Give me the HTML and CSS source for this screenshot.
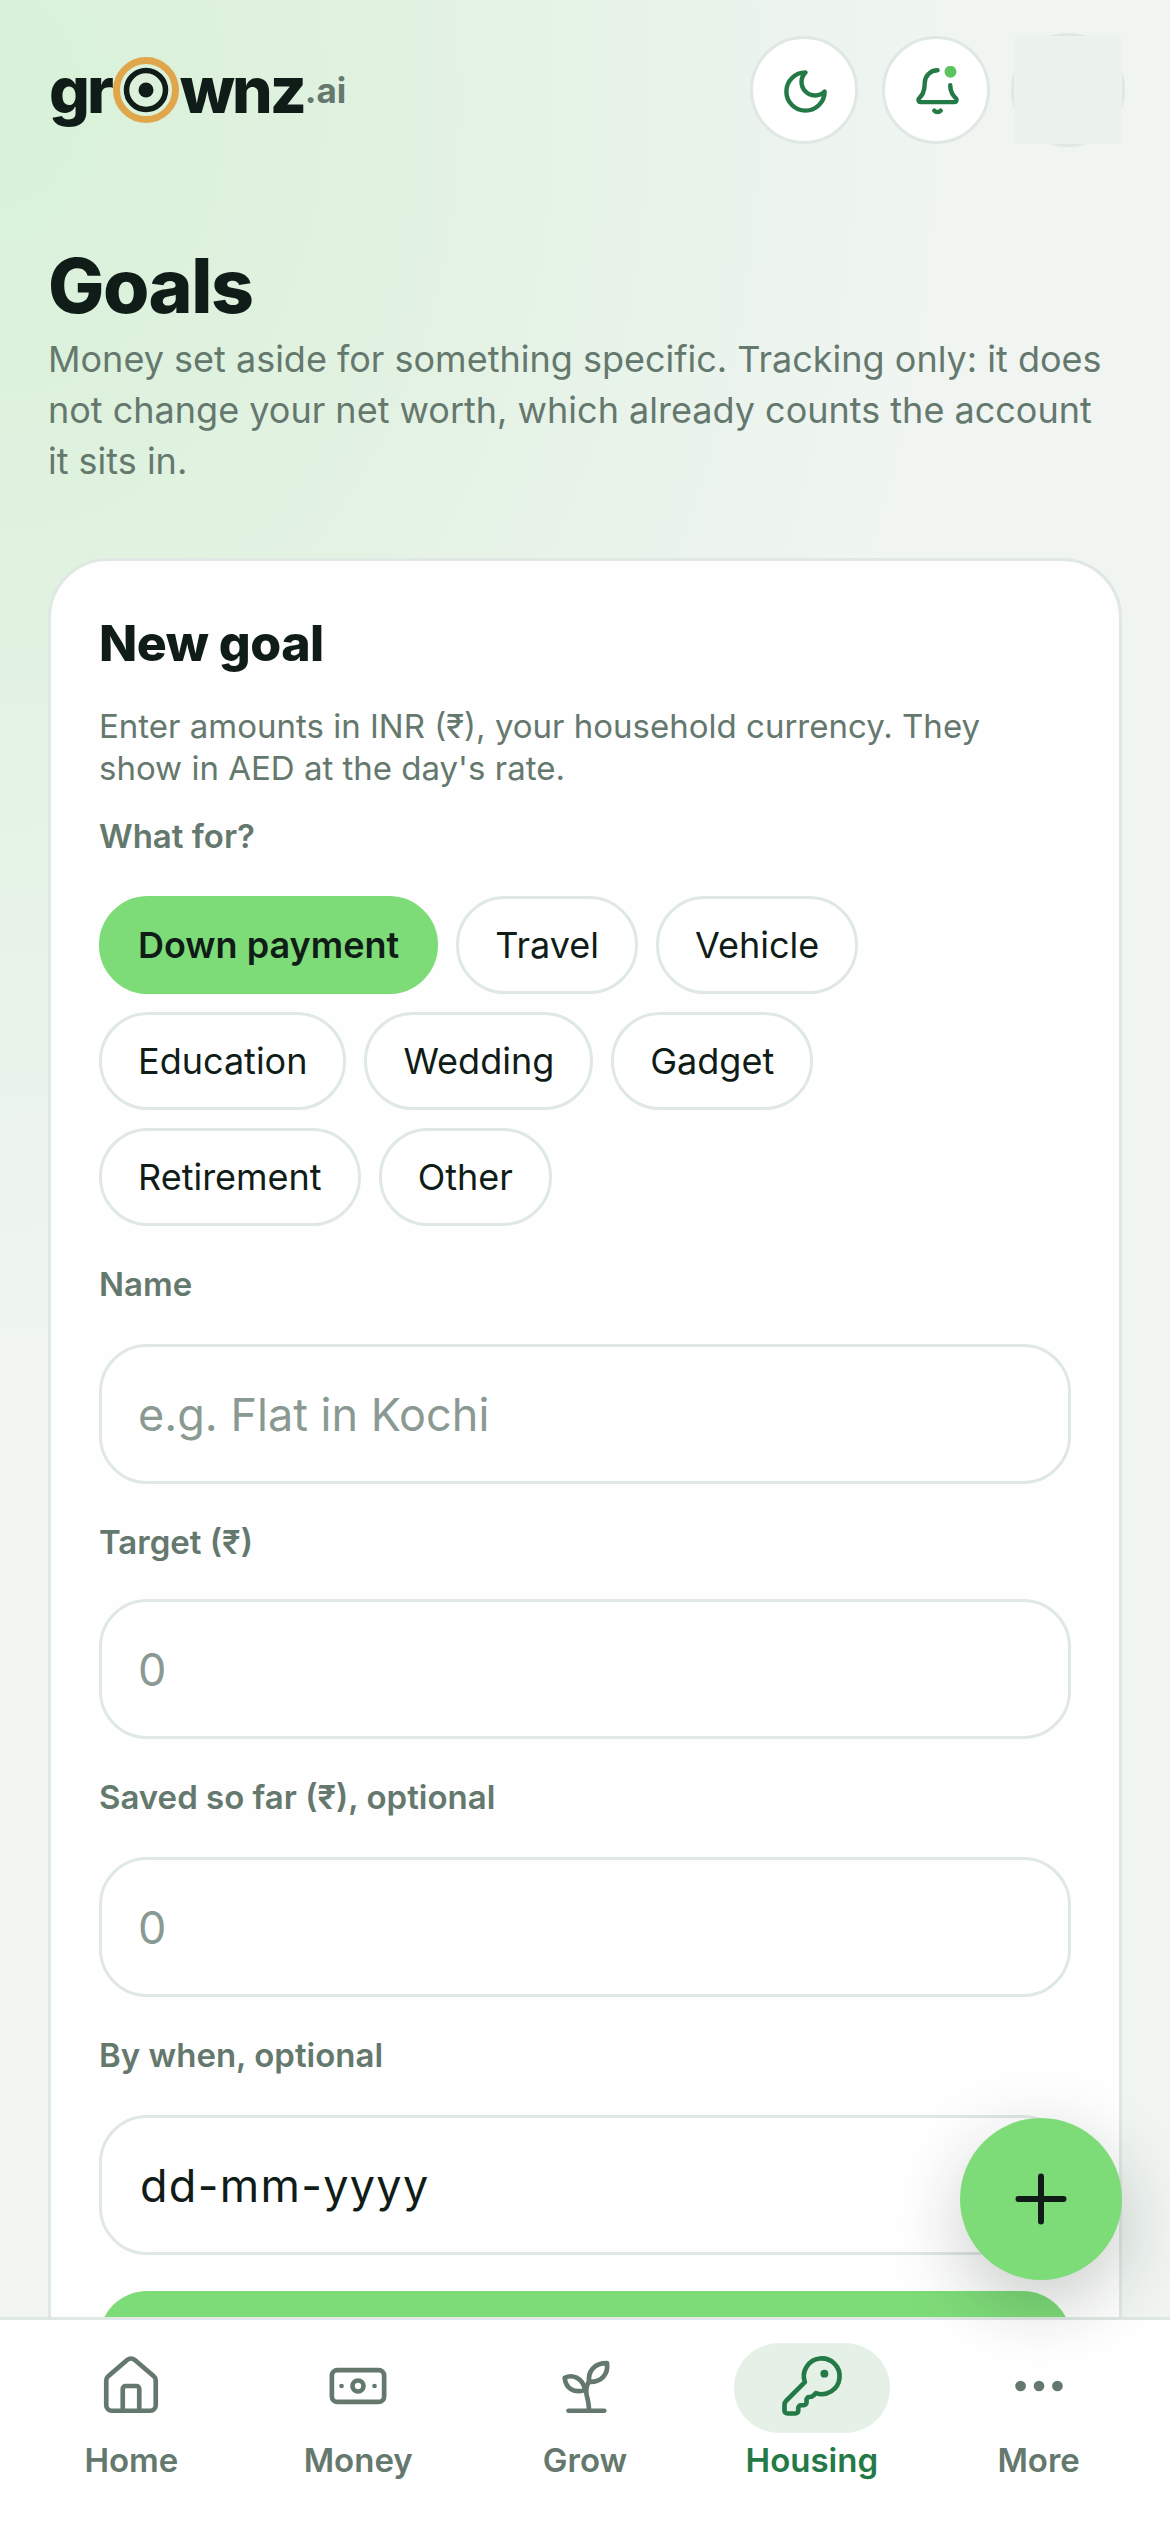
FILE: index.html
```html
<!DOCTYPE html>
<html lang="en">
<head>
  <meta charset="UTF-8">
  <title>Goals</title>
  <link rel="stylesheet" href="styles.css">
</head>
<body>

  <main class="page">
    <!-- TOP BAR -->
    <header class="topbar">
      <div class="logo">
        <span class="logo-text">gr</span>
        <svg class="logo-eye" viewBox="0 0 66 66" aria-hidden="true">
          <circle cx="33" cy="33" r="29.5" fill="none" stroke="#e0a64b" stroke-width="7"/>
          <circle cx="33" cy="33" r="19.5" fill="none" stroke="#101c17" stroke-width="5.5"/>
          <circle cx="33" cy="33" r="7.5" fill="#101c17"/>
        </svg>
        <span class="logo-text">wnz</span>
        <span class="logo-ai">.ai</span>
      </div>
      <div class="topbar-actions">
        <button class="round-btn" aria-label="Theme">
          <svg class="top-icon" viewBox="0 0 24 24"><path d="M12 3a6 6 0 0 0 9 9 9 9 0 1 1-9-9Z"/></svg>
        </button>
        <button class="round-btn" aria-label="Notifications">
          <svg class="top-icon" viewBox="0 0 24 24">
            <path d="M12 2a6 6 0 0 0-6 6c0 4.499-1.411 5.956-2.738 7.326A1 1 0 0 0 4 17h16a1 1 0 0 0 .74-1.673C19.41 13.956 18 12.499 18 9"/>
            <path d="M10.5 21a2 2 0 0 0 3 0"/>
            <circle class="bell-dot" cx="18.1" cy="2.7" r="2.8"/>
          </svg>
        </button>
        <div class="avatar"><div class="avatar-mask"></div></div>
      </div>
    </header>

    <h1 class="title">Goals</h1>
    <p class="subtitle">Money set aside for something specific. Tracking only: it does not change your net worth, which already counts the account it sits in.</p>

    <!-- NEW GOAL -->
    <section class="card">
      <h2 class="card-title">New goal</h2>
      <p class="card-note">Enter amounts in INR (₹), your household currency. They show in AED at the day's rate.</p>

      <label class="field-label label-what">What for?</label>
      <div class="chips">
        <button class="chip chip-on">Down payment</button>
        <button class="chip">Travel</button>
        <button class="chip">Vehicle</button>
        <button class="chip">Education</button>
        <button class="chip">Wedding</button>
        <button class="chip">Gadget</button>
        <button class="chip">Retirement</button>
        <button class="chip">Other</button>
      </div>

      <label class="field-label" for="name">Name</label>
      <input class="field" id="name" type="text" placeholder="e.g. Flat in Kochi">

      <label class="field-label label-target" for="target">Target (₹)</label>
      <input class="field" id="target" type="text" placeholder="0">

      <label class="field-label" for="saved">Saved so far (₹), optional</label>
      <input class="field" id="saved" type="text" placeholder="0">

      <label class="field-label" for="when">By when, optional</label>
      <input class="field field-date" id="when" type="text" value="dd-mm-yyyy">

      <button class="save-btn" aria-label="Save"></button>
    </section>
  </main>

  <button class="fab" aria-label="Add">
    <svg viewBox="0 0 24 24"><path d="M4.5 12h15M12 4.5v15"/></svg>
  </button>

  <!-- BOTTOM NAV -->
  <nav class="tabbar">
    <a class="tab">
      <span class="tab-icon">
        <svg viewBox="0 0 24 24">
          <path d="M15 21v-8a1 1 0 0 0-1-1h-4a1 1 0 0 0-1 1v8"/>
          <path d="M3 10a2 2 0 0 1 .709-1.528l7-5.999a2 2 0 0 1 2.582 0l7 5.999A2 2 0 0 1 21 10v9a2 2 0 0 1-2 2H5a2 2 0 0 1-2-2z"/>
        </svg>
      </span>
      Home
    </a>
    <a class="tab">
      <span class="tab-icon">
        <svg viewBox="0 0 24 24">
          <rect x="2.5" y="6.2" width="19" height="11.6" rx="2"/>
          <circle cx="12" cy="12" r="2"/>
          <path d="M6 12h.01M18 12h.01"/>
        </svg>
      </span>
      Money
    </a>
    <a class="tab">
      <span class="tab-icon">
        <svg viewBox="0 0 24 24">
          <path d="M6 21h13"/>
          <path d="M13.2 10.8c-.8 1.5-1 2.5-.6 4.5.4 1.8 1 3.5.8 5.7"/>
          <path d="M4.6 9c2.5-1.2 6.5-.5 7.4 4.5-4 1.2-7-.5-7.4-4.5z"/>
          <path d="M13.5 10.5c-.5-4 2-6.8 6.5-6.8.5 4-2 7-6.5 6.8z"/>
        </svg>
      </span>
      Grow
    </a>
    <a class="tab tab-on">
      <span class="tab-icon">
        <svg viewBox="0 0 24 24">
          <path d="M2.586 17.414A2 2 0 0 0 2 18.828V21a1 1 0 0 0 1 1h3a1 1 0 0 0 1-1v-1a1 1 0 0 1 1-1h1a1 1 0 0 0 1-1v-1a1 1 0 0 1 1-1h.172a2 2 0 0 0 1.414-.586l.814-.814a6.5 6.5 0 1 0-4-4z"/>
          <circle class="key-hole" cx="16.5" cy="7.5" r=".6"/>
        </svg>
      </span>
      Housing
    </a>
    <a class="tab">
      <span class="tab-icon">
        <svg viewBox="0 0 24 24">
          <circle class="more-dot" cx="5.3" cy="12" r="1.1"/>
          <circle class="more-dot" cx="12" cy="12" r="1.1"/>
          <circle class="more-dot" cx="18.7" cy="12" r="1.1"/>
        </svg>
      </span>
      More
    </a>
  </nav>

</body>
</html>
```
FILE: styles.css
```css
* {
  box-sizing: border-box;
}

body {
  margin: 0;
  height: 100vh;
  display: flex;
  flex-direction: column;
  overflow: hidden;
  position: relative;
  font-family: Inter, "Noto Sans", sans-serif;
  color: #101c17;
  background: radial-gradient(ellipse 950px 1250px at 0 100px, #d8f1d8 0%, #e2f2e2 45%, #f0f5f2 100%);
}

button {
  font-family: inherit;
}

svg {
  display: block;
  fill: none;
  stroke-linecap: round;
  stroke-linejoin: round;
}

.page {
  flex: 1;
  min-height: 0;
  overflow: hidden;
  padding: 36px 48px 0;
}

/* top bar */
.topbar {
  display: flex;
  align-items: center;
  justify-content: space-between;
  height: 108px;
}

.logo {
  display: flex;
  align-items: center;
  margin-left: 1px;
}

.logo-text {
  font-size: 64px;
  font-weight: 800;
  letter-spacing: -3px;
  line-height: 66px;
}

.logo-eye {
  width: 66px;
  height: 66px;
  margin: 0 1px 0 2px;
}

.logo-ai {
  font-size: 35px;
  font-weight: 700;
  color: #65786e;
  margin-left: 1px;
  line-height: 66px;
}

.topbar-actions {
  display: flex;
  align-items: center;
  gap: 24px;
}

.round-btn {
  width: 108px;
  height: 108px;
  padding: 0;
  border-radius: 50%;
  border: 3px solid #dfe8e2;
  background: #fff;
  display: flex;
  align-items: center;
  justify-content: center;
}

.top-icon {
  width: 51px;
  height: 51px;
  margin: 3px 0 0 3px;
  stroke: #237a47;
  stroke-width: 2.1;
}

.bell-dot {
  fill: #5cc45e;
  stroke: none;
}

.avatar {
  width: 114px;
  height: 114px;
  margin: -3px;
  border-radius: 50%;
  border: 3px solid #dfe8e2;
  position: relative;
}

.avatar-mask {
  position: absolute;
  inset: 0;
  background: #ecf3ed;
}

/* heading */
.title {
  margin: 97px 0 3px;
  font-size: 75px;
  line-height: 90px;
  font-weight: 800;
  letter-spacing: -1.5px;
}

.subtitle {
  margin: 0;
  font-size: 36px;
  line-height: 51px;
  color: #65786e;
}

/* card */
.card {
  margin-top: 71px;
  padding: 48px;
  background: #fdfefd;
  border: 3px solid #dfe8e2;
  border-radius: 60px;
}

.card-title {
  margin: 0;
  font-size: 50px;
  line-height: 68px;
  font-weight: 800;
  letter-spacing: -0.5px;
}

.card-note {
  margin: 28px 0 0;
  font-size: 33px;
  line-height: 42px;
  color: #65786e;
}

.field-label {
  display: block;
  margin: 37px 0 39px;
  font-size: 33px;
  line-height: 42px;
  font-weight: 600;
  color: #65786e;
}

.label-what {
  margin: 26px 0 39px;
}

.label-target {
  margin-bottom: 36px;
}

.chips {
  display: flex;
  flex-wrap: wrap;
  gap: 18px;
}

.chip {
  height: 98px;
  padding: 0 36px;
  font-size: 36px;
  color: #101c17;
  background: #fff;
  border: 3px solid #dfe8e2;
  border-radius: 50px;
}

.chip-on {
  font-weight: 600;
  background: #7edc78;
  border-color: #7edc78;
}

.field {
  display: block;
  width: 100%;
  height: 140px;
  padding: 0 36px;
  font-family: inherit;
  font-size: 45px;
  color: #101c17;
  background: #fff;
  border: 3px solid #dfe8e2;
  border-radius: 48px;
}

.field::placeholder {
  color: #8a9a92;
}

.field-date {
  padding-left: 38px;
  letter-spacing: 1.3px;
}

.save-btn {
  display: block;
  width: 100%;
  height: 140px;
  margin-top: 36px;
  background: #7edc78;
  border: none;
  border-radius: 48px;
}

/* floating add button */
.fab {
  position: absolute;
  right: 48px;
  bottom: 252px;
  width: 162px;
  height: 162px;
  padding: 0;
  border: none;
  border-radius: 50%;
  background: #7edc78;
  box-shadow: 0 24px 72px rgba(16, 28, 23, 0.22);
  display: flex;
  align-items: center;
  justify-content: center;
  z-index: 2;
}

.fab svg {
  width: 72px;
  height: 72px;
  stroke: #101c17;
  stroke-width: 2;
}

/* bottom nav */
.tabbar {
  flex: none;
  height: 215px;
  padding: 23px 18px 0;
  display: grid;
  grid-template-columns: repeat(5, 1fr);
  align-items: start;
  background: #fff;
  border-top: 3px solid #dfe8e2;
  position: relative;
  z-index: 1;
}

.tab {
  display: flex;
  flex-direction: column;
  align-items: center;
  font-size: 33px;
  line-height: 42px;
  font-weight: 600;
  color: #65786e;
}

.tab-icon {
  width: 156px;
  height: 90px;
  margin-bottom: 6px;
  border-radius: 45px;
  display: flex;
  align-items: center;
  justify-content: center;
}

.tab-icon svg {
  width: 66px;
  height: 66px;
  margin-bottom: 4px;
  stroke: currentColor;
  stroke-width: 1.7;
}

.tab-on {
  color: #237a47;
}

.tab-on .tab-icon {
  background: #e5f1e6;
}

.key-hole,
.more-dot {
  fill: currentColor;
}
```
